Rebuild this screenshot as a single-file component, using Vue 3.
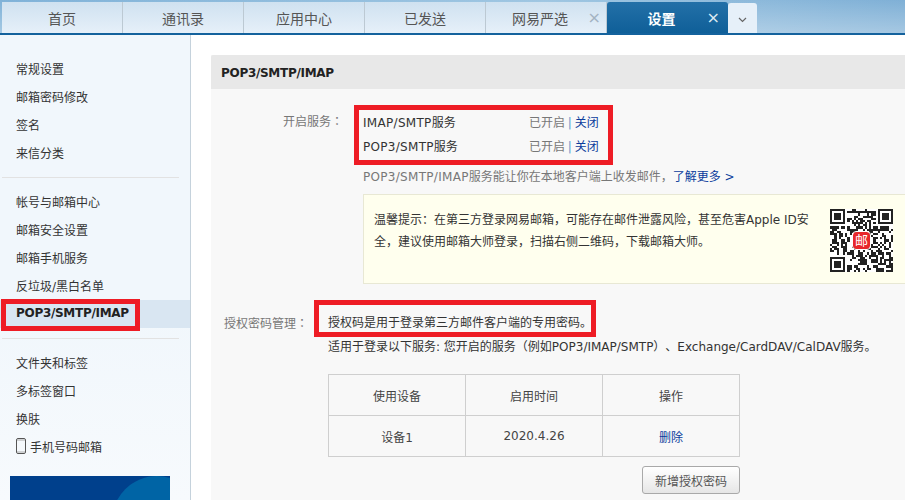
<script setup>
const tabs = [
  { name: '首页' }, { name: '通讯录' }, { name: '应用中心' }, { name: '已发送' },
  { name: '网易严选', close: true }, { name: '设置', close: true, active: true }
]
const groups = [
  ['常规设置', '邮箱密码修改', '签名', '来信分类'],
  ['帐号与邮箱中心', '邮箱安全设置', '邮箱手机服务', '反垃圾/黑白名单', 'POP3/SMTP/IMAP'],
  ['文件夹和标签', '多标签窗口', '换肤', '手机号码邮箱']
]
const services = ['IMAP/SMTP', 'POP3/SMTP']
const size = 29
const inFinder = (x, y) => (x < 8 && y < 8) || (x > size - 9 && y < 8) || (x < 8 && y > size - 9)
const finder = (x, y, ox, oy) => {
  const a = x - ox, b = y - oy
  if (a < 0 || b < 0 || a > 6 || b > 6) return false
  return a === 0 || b === 0 || a === 6 || b === 6 || (a > 1 && a < 5 && b > 1 && b < 5)
}
const cells = []
let seed = 20200426
for (let y = 0; y < size; y++) {
  for (let x = 0; x < size; x++) {
    seed = (seed * 1103515245 + 12345) & 0x7fffffff
    const on = inFinder(x, y)
      ? finder(x, y, 0, 0) || finder(x, y, size - 7, 0) || finder(x, y, 0, size - 7)
      : (seed >> 16) % 100 < 50
    if (on) cells.push({ x, y })
  }
}
</script>

<template>
  <div class="page">
    <nav class="tabbar">
      <div v-for="t in tabs" :key="t.name" class="tab" :class="{ active: t.active, closable: t.close }">
        <span class="tab-name">{{ t.name }}</span>
        <span v-if="t.close" class="tab-close">×</span>
      </div>
      <div class="tab-more">
        <svg width="9" height="6" viewBox="0 0 9 6"><path d="M1 1l3.5 3.5L8 1" fill="none" stroke="#666" stroke-width="1.2" /></svg>
      </div>
    </nav>

    <div class="main">
      <aside class="sidebar">
        <ul v-for="(g, i) in groups" :key="i" class="side-group">
          <li v-for="item in g" :key="item" class="side-item" :class="{ current: item === 'POP3/SMTP/IMAP' }">
            <svg v-if="item === '手机号码邮箱'" class="phone" width="10" height="16" viewBox="0 0 10 16">
              <rect x=".5" y=".5" width="9" height="15" rx="1.5" fill="none" stroke="#555" />
              <path d="M1 2h8M1 14h8" stroke="#aaa" />
            </svg>
            {{ item }}
          </li>
        </ul>
        <div class="banner"><i class="banner-circle"></i></div>
      </aside>

      <main class="content">
        <section class="panel">
          <h2 class="panel-title">POP3/SMTP/IMAP</h2>

          <div class="service-row">
            <div class="label service-label">开启服务：</div>
            <div class="service-body">
              <div v-for="s in services" :key="s" class="service-line">
                <span class="service-name"><span class="latin">{{ s }}</span>服务</span>
                <span class="status">已开启 <b class="sep">|</b> <a class="link">关闭</a></span>
              </div>
              <p class="info"><span class="latin">POP3/SMTP/IMAP</span>服务能让你在本地客户端上收发邮件，<a class="link">了解更多 &gt;</a></p>
              <div class="tip">
                <p class="tip-text">温馨提示：在第三方登录网易邮箱，可能存在邮件泄露风险，甚至危害Apple ID安全，建议使用邮箱大师登录，扫描右侧二维码，下载邮箱大师。</p>
                <div class="qr">
                  <svg width="63" height="63" viewBox="0 0 29 29" shape-rendering="crispEdges">
                    <rect v-for="c in cells" :key="c.x + '-' + c.y" :x="c.x" :y="c.y" width="1" height="1" fill="#222" />
                  </svg>
                  <span class="qr-logo">邮</span>
                </div>
              </div>
            </div>
          </div>

          <div class="auth-row">
            <div class="label auth-label">授权密码管理：</div>
            <div class="auth-body">
              <p class="auth-line">授权码是用于登录第三方邮件客户端的专用密码。</p>
              <p class="auth-line">适用于登录以下服务: 您开启的服务（例如POP3/IMAP/SMTP）、Exchange/CardDAV/CalDAV服务。</p>
              <table class="devices">
                <tbody>
                  <tr><td>使用设备</td><td>启用时间</td><td>操作</td></tr>
                  <tr><td>设备1</td><td>2020.4.26</td><td><a class="link">删除</a></td></tr>
                </tbody>
              </table>
              <div class="actions"><button class="add-btn">新增授权密码</button></div>
            </div>
          </div>
        </section>
      </main>
    </div>

    <i class="mark mark-side"></i>
    <i class="mark mark-service"></i>
    <i class="mark mark-auth"></i>
  </div>
</template>

<style>
html, body { margin: 0; background: #fff; }
</style>

<style scoped>
.page {
  position: relative;
  width: 905px;
  height: 500px;
  overflow: hidden;
  font-family: "DejaVu Sans", "Noto Sans CJK SC", sans-serif;
  font-size: 12px;
  color: #444;
  text-spacing-trim: space-all;
}
p, h2, ul { margin: 0; padding: 0; }
ul { list-style: none; }
.latin { letter-spacing: 0.3px; }
.tabbar {
  display: flex;
  box-sizing: border-box;
  height: 35px;
  padding: 2px 0 0 2px;
  border-bottom: 2px solid #14629d;
  background:
    linear-gradient(rgba(255, 255, 255, 0), rgba(255, 255, 255, 0.3)),
    linear-gradient(90deg, #7fb2d8 0, #9fc6e2 60%, #7fb0d6 100%);
}
.tab {
  position: relative;
  display: flex;
  align-items: center;
  justify-content: center;
  box-sizing: border-box;
  width: 121px;
  height: 31px;
  border-right: 1px solid #bcc9d3;
  background: linear-gradient(#cfe1f0, #e6f0f9);
  color: #555;
  font-size: 14px;
}
.tab.closable { padding-right: 12px; }
.tab.active {
  border: 0;
  border-radius: 3px 3px 0 0;
  background: linear-gradient(#2370a8, #0f5f98);
  color: #fff;
  font-weight: 700;
}
.tab-close {
  position: absolute;
  right: 5px;
  top: 6px;
  color: #a3b3c2;
  font-size: 16px;
  font-weight: 400;
  line-height: 20px;
}
.active .tab-close { right: 8px; color: #dde9f3; }
.tab-more {
  display: flex;
  align-items: center;
  justify-content: center;
  box-sizing: border-box;
  width: 29px;
  height: 30px;
  margin-top: 1px;
  padding-top: 3px;
  border-radius: 3px 3px 0 0;
  background: #e6f0f9;
}
.main { display: flex; height: 465px; }
.sidebar {
  box-sizing: border-box;
  flex: none;
  width: 191px;
  padding-top: 20px;
  border-right: 1px solid #c5d2dc;
  background: linear-gradient(#f1f7fc 60%, #f7fafd 100%);
  color: #333;
}
.side-group { margin: 0 11px 10px 2px; padding-bottom: 10px; border-bottom: 1px solid #e2e2e2; }
.side-group:nth-of-type(3) { margin-bottom: 0; padding-bottom: 15px; border: 0; }
.side-item {
  display: flex;
  align-items: center;
  box-sizing: border-box;
  height: 28px;
  margin: 0 -11px 0 -2px;
  padding: 0 0 2px 16px;
}
.side-item.current {
  background: #d9e6f2;
  color: #222;
  font-weight: 700;
  letter-spacing: -0.3px;
}
.phone { margin-right: 4px; }
.banner {
  position: relative;
  overflow: hidden;
  width: 160px;
  height: 30px;
  margin-left: 10px;
  background: #00408c;
}
.banner-circle {
  position: absolute;
  left: 102px;
  top: 0;
  width: 90px;
  height: 90px;
  border-radius: 50%;
  background: #0064a5;
}
.content { flex: 1; padding: 20px 0 0 20px; }
.panel { height: 445px; background: #f8f8f8; }
.panel-title {
  height: 34px;
  padding-left: 10px;
  border-radius: 2px 0 0 0;
  background: #e8e8e8;
  color: #222;
  font-size: 12px;
  letter-spacing: -0.3px;
  line-height: 36px;
}
.label {
  flex: none;
  color: #777;
  font-family: "DejaVu Sans", "Noto Sans CJK TC", sans-serif;
  text-align: right;
}
.service-row { display: flex; padding-top: 20px; }
.service-label { width: 132px; margin-right: 20px; line-height: 26px; }
.service-body { flex: 1; }
.service-line { display: flex; height: 24px; align-items: center; color: #333; }
.service-name { width: 166px; }
.status { color: #777; word-spacing: -1px; }
.sep { color: #5a9bcc; font-weight: 400; }
.link { color: #0a3c9c; }
.info { margin-top: 10px; height: 26px; line-height: 20px; color: #777; }
.tip {
  display: flex;
  box-sizing: border-box;
  height: 90px;
  margin-top: 1px;
  padding: 14px 12px 0 10px;
  border: 1px solid #e8e8d4;
  border-right: 0;
  background: #ffffee;
  color: #333;
}
.tip-text { width: 436px; flex: none; line-height: 22px; }
.qr {
  position: relative;
  width: 63px;
  height: 63px;
  margin-left: 20px;
  background: #fff;
}
.qr svg { display: block; }
.qr-logo {
  position: absolute;
  left: 23px;
  top: 23px;
  width: 17px;
  height: 17px;
  border-radius: 3px;
  outline: 1px solid #fff;
  background: #e8262a;
  color: #fff;
  font-size: 13px;
  line-height: 17px;
  text-align: center;
}
.auth-row { display: flex; margin-top: 27px; }
.auth-label { width: 97px; margin-right: 20px; line-height: 26px; }
.auth-body { flex: 1; }
.auth-line { height: 24px; line-height: 24px; color: #333; }
.devices {
  width: 412px;
  margin-top: 15px;
  border-collapse: collapse;
  table-layout: fixed;
}
.devices td {
  height: 40px;
  padding: 0;
  border: 1px solid #cfcfcf;
  text-align: center;
  color: #444;
}
.actions { display: flex; justify-content: flex-end; width: 412px; margin-top: 9px; }
.add-btn {
  box-sizing: border-box;
  width: 98px;
  height: 28px;
  padding: 0;
  border: 1px solid #a9a9a9;
  border-radius: 3px;
  background: linear-gradient(#fff, #e6e6e6);
  color: #555;
  font: inherit;
}
.mark { position: absolute; box-sizing: border-box; border: 5px solid #ee1c25; pointer-events: none; }
.mark-side { left: 1px; top: 299px; width: 139px; height: 32px; }
.mark-service { left: 354px; top: 105px; width: 259px; height: 60px; }
.mark-auth { left: 314px; top: 300px; width: 282px; height: 37px; }
</style>
